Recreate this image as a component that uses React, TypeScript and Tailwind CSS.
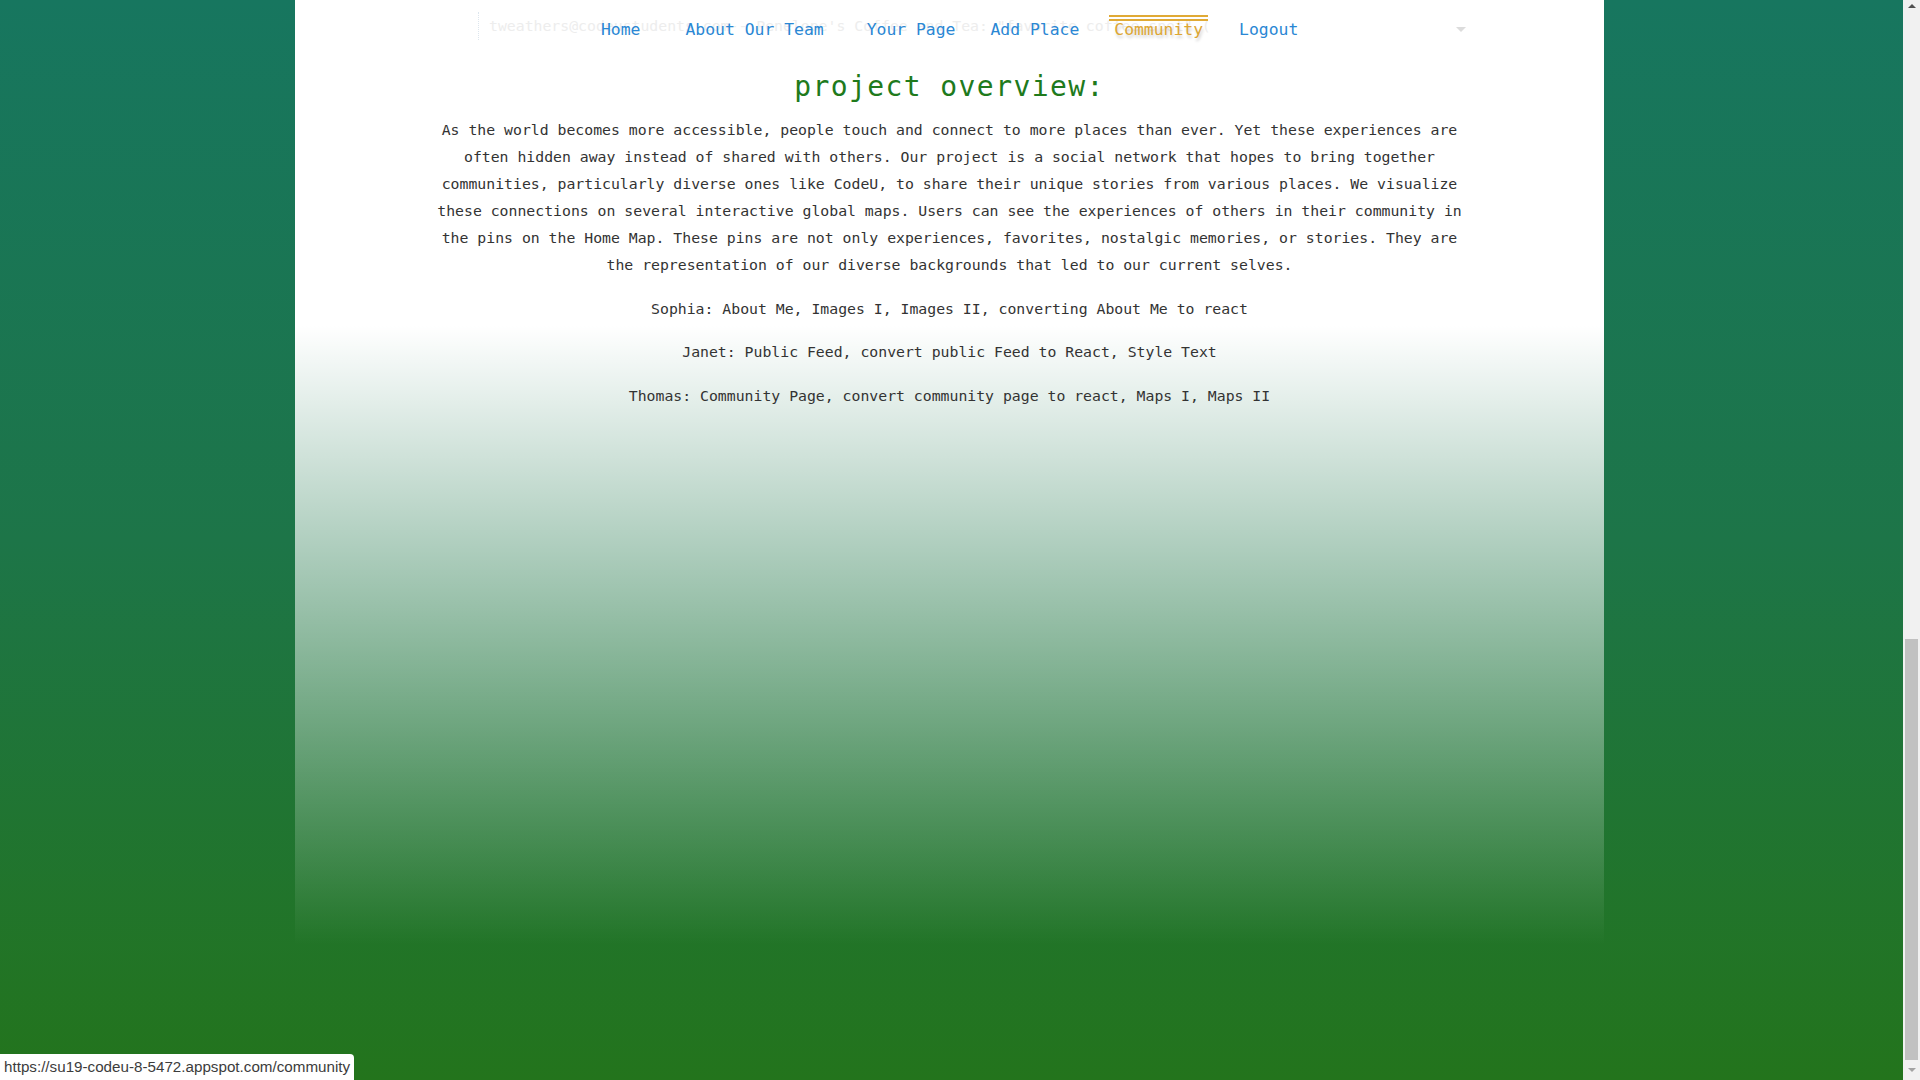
import React from "react";

const mono = "font-['DejaVu_Sans_Mono',monospace]";

const navItems = [
    { label: "Home", gap: "ml-[301px]" },
    { label: "About Our Team", gap: "ml-[35px]" },
    { label: "Your Page", gap: "ml-[33px]" },
    { label: "Add Place", gap: "ml-[25px]" },
    { label: "Community", gap: "ml-[25px]", active: true },
    { label: "Logout", gap: "ml-[26px]" },
];

const credits = [
    "Sophia: About Me, Images I, Images II, converting About Me to react",
    "Janet: Public Feed, convert public Feed to React, Style Text",
    "Thomas: Community Page, convert community page to react, Maps I, Maps II",
];

const Scrollbar = () => (
    <div className="w-[17px] h-screen bg-[#f1f1f1] flex flex-col">
        <div className="h-[17px] flex items-start justify-center pt-[4px]">
            <div className="w-0 h-0 border-x-[4px] border-x-transparent border-b-[4px] border-b-[#505050]" />
        </div>
        <div className="h-[622px]" />
        <div className="h-[421px] mx-[2px] bg-[#c1c1c1]" />
        <div className="h-[20px] flex items-start justify-center pt-[8px]">
            <div className="w-0 h-0 border-x-[4px] border-x-transparent border-t-[4px] border-t-[#a3a3a3]" />
        </div>
    </div>
);

const CommunityPage = () => {
    return (
        <div className="h-screen w-full flex overflow-hidden bg-[linear-gradient(to_bottom,#17765f,#1d7548_50%,#23741c)]">
            <div className="flex-1 relative">
                <section
                    className={`ml-[295px] w-[1309px] h-screen relative bg-[linear-gradient(to_bottom,#ffffff_326px,rgba(255,255,255,0)_945px)] ${mono}`}
                >
                    {/* faded select left over behind the nav */}
                    <div className="absolute left-[183px] top-[12px] w-[992px] h-[28px] border-l border-dotted border-l-[#dde6ee] flex items-center pl-[10px] text-[14.8px] text-[#ededed] whitespace-pre">
                        tweathers@codeustudents.com-- Penelope's Coffee and Tea: "favorite coffee spot" (
                        <div className="absolute left-[977px] top-[15px] w-0 h-0 border-x-[5px] border-x-transparent border-t-[5px] border-t-[#dcdcdc]" />
                    </div>

                    <nav className="relative h-[59px] pt-[15px] flex items-start text-[16.4px]">
                        {navItems.map((item) => (
                            <a
                                key={item.label}
                                className={`${item.gap} px-[5px] border-t-[6px] leading-[17px] whitespace-pre ${
                                    item.active
                                        ? "border-double border-t-[#e0aa35] text-[#dda633] [text-shadow:1px_3px_3px_rgba(0,0,0,0.18)]"
                                        : "border-transparent text-[#2a87d4]"
                                }`}
                            >
                                {item.label}
                            </a>
                        ))}
                    </nav>

                    <h1 className="mt-[8px] text-center text-[28px] leading-[40px] tracking-[1.4px] text-[#207a1c]">
                        project overview:
                    </h1>

                    <div className="mx-auto w-[1040px] mt-[9px] text-center text-[14.8px] leading-[27px] text-[#333333]">
                        <p>
                            As the world becomes more accessible, people touch and connect to more places than ever. Yet these
                            experiences are often hidden away instead of shared with others. Our project is a social network that
                            hopes to bring together communities, particularly diverse ones like CodeU, to share their unique stories
                            from various places. We visualize these connections on several interactive global maps. Users can see the
                            experiences of others in their community in the pins on the Home Map. These pins are not only experiences,
                            favorites, nostalgic memories, or stories. They are the representation of our diverse backgrounds that
                            led to our current selves.
                        </p>
                        {credits.map((line) => (
                            <p key={line} className="mt-[16.5px]">
                                {line}
                            </p>
                        ))}
                    </div>
                </section>

                {/* browser status bubble */}
                <div className="fixed left-0 bottom-0 h-[26px] pl-[4px] pr-[4px] bg-white rounded-tr-[4px] flex items-center font-['Liberation_Sans',sans-serif] text-[15.2px] text-[#3c3c3c]">
                    https://su19-codeu-8-5472.appspot.com/community
                </div>
            </div>
            <Scrollbar />
        </div>
    );
};

export default function App() {
    return <CommunityPage />;
}
